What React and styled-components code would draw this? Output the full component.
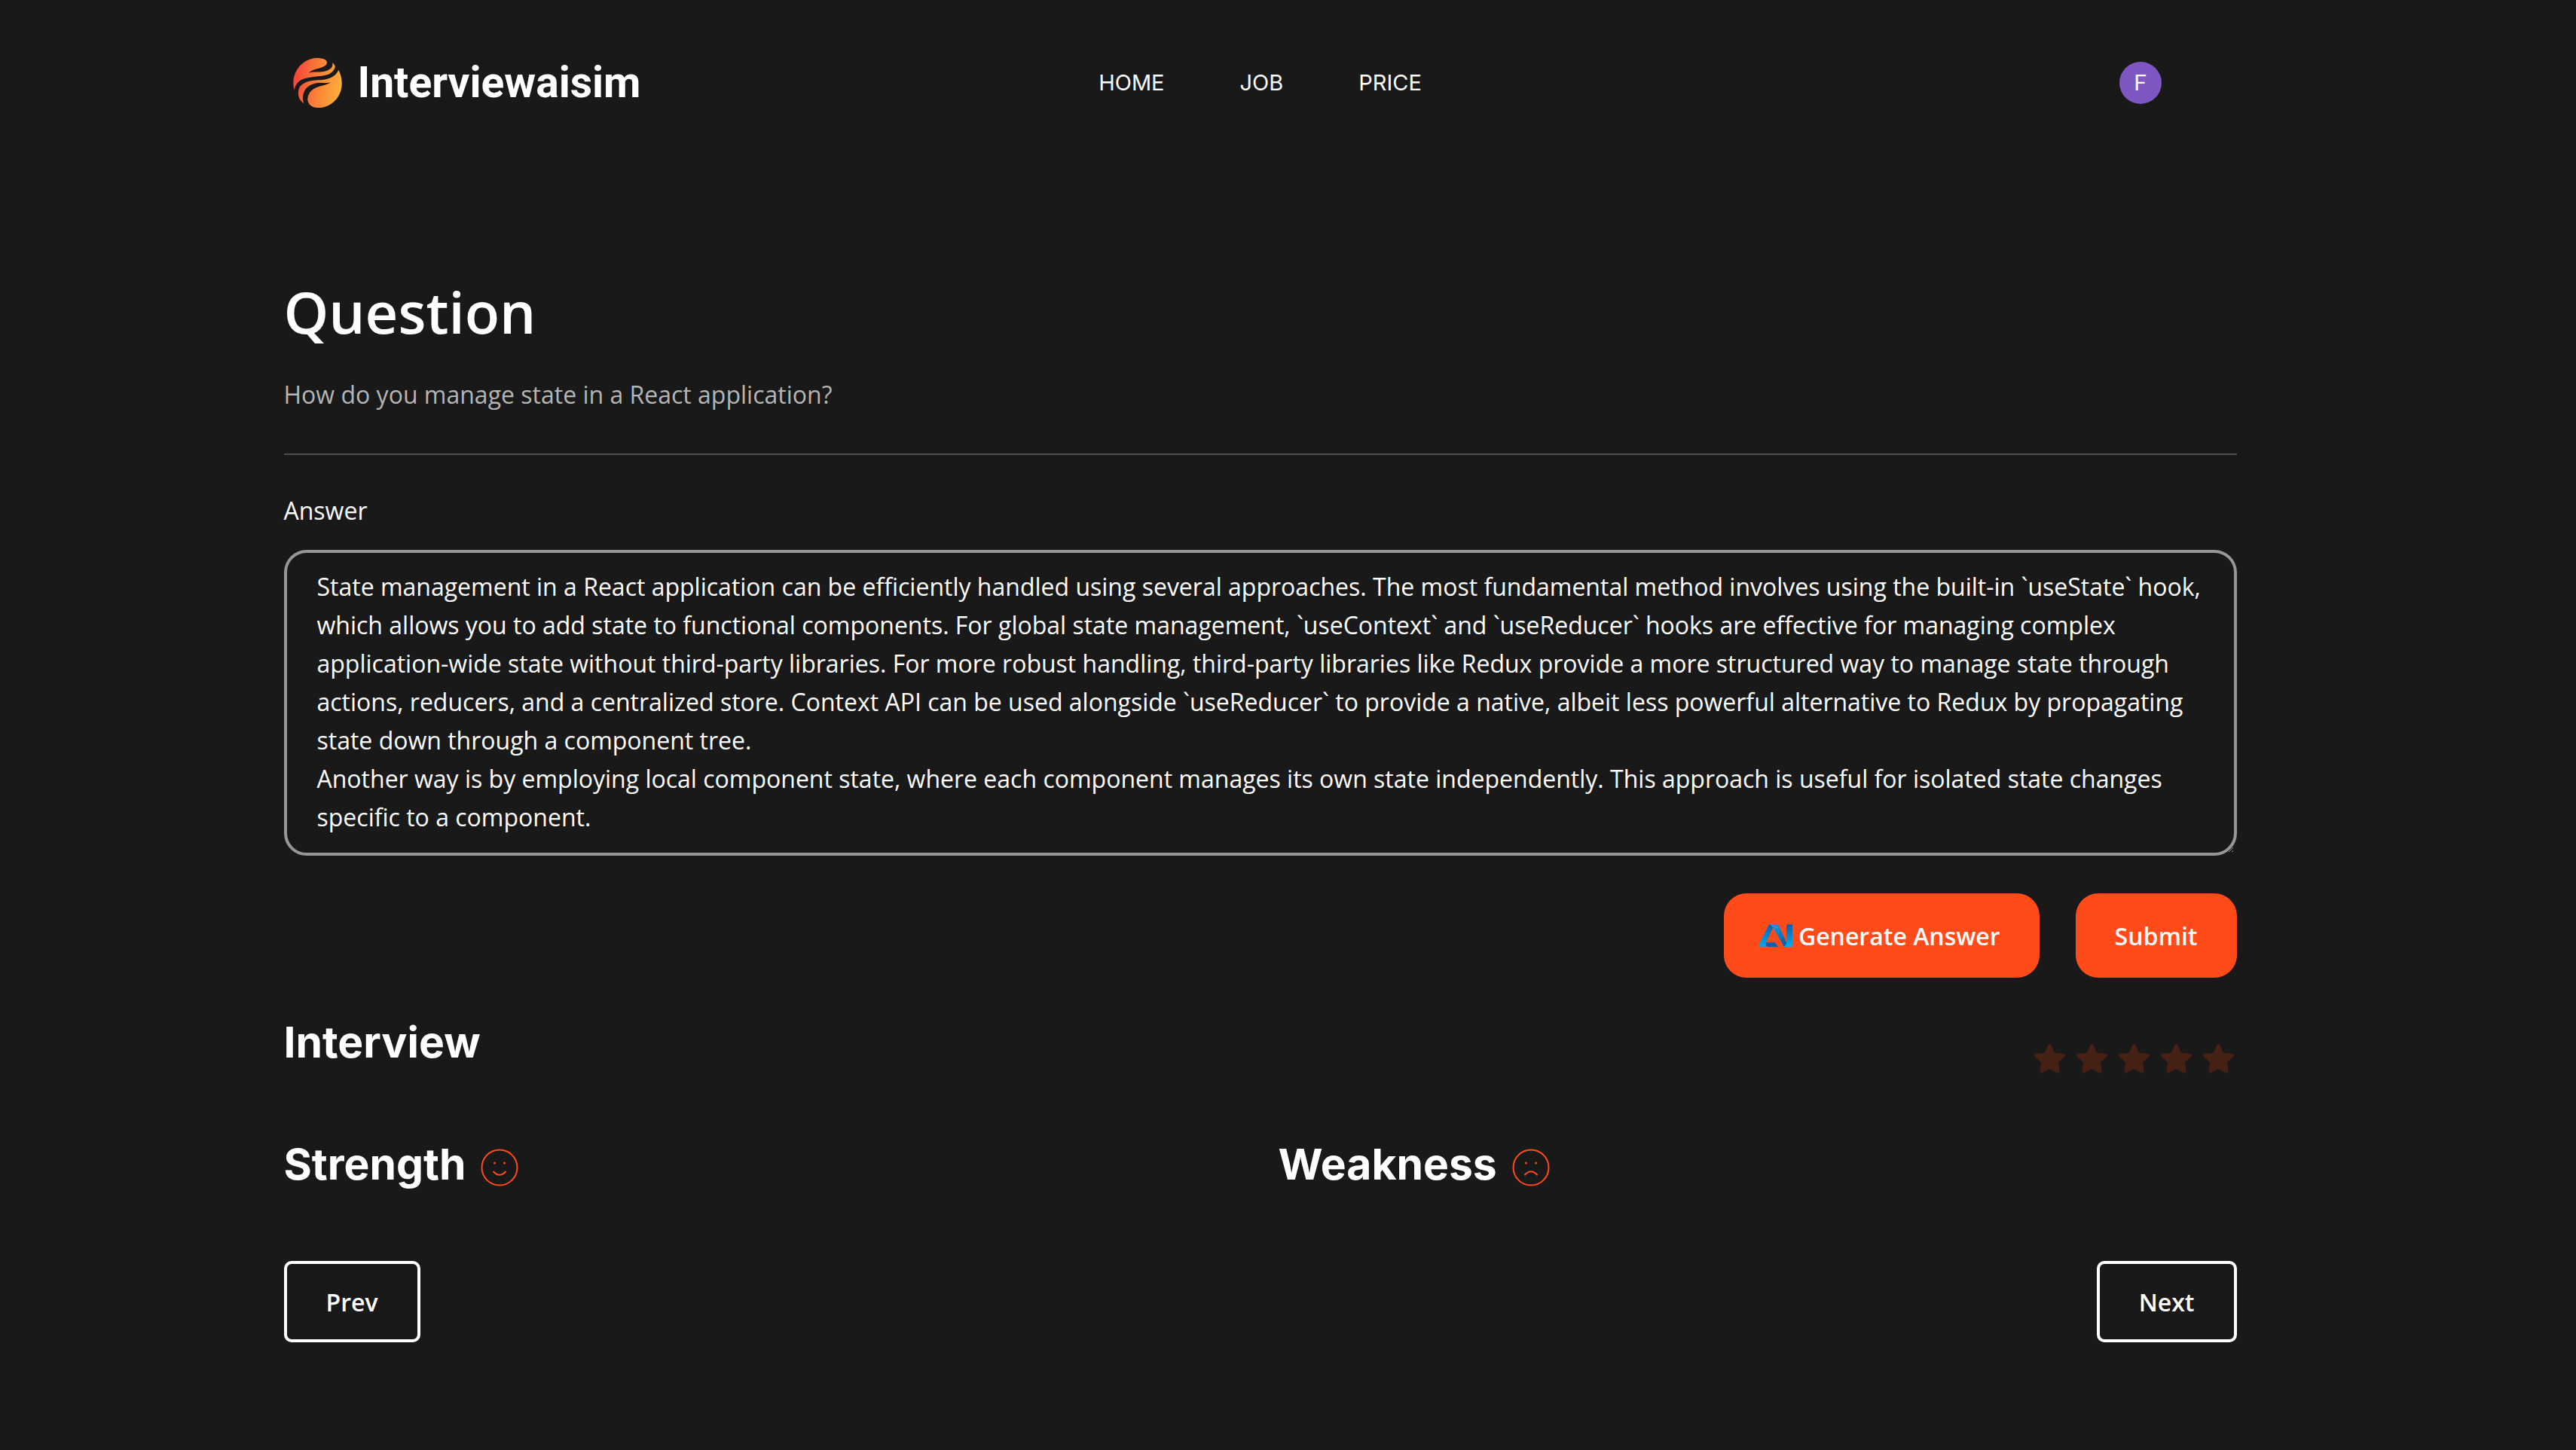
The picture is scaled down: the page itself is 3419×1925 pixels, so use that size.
import React, { useState } from "react";
import styled, { createGlobalStyle } from "styled-components";

const sans = `"Open Sans", "Noto Sans", sans-serif`;
const display = `Inter, "Open Sans", sans-serif`;
const accent = "#ff4b1a";

const GlobalStyle = createGlobalStyle`
  *, *::before, *::after { box-sizing: border-box; }
  body {
    margin: 0;
    min-height: 100vh;
    background: #191919;
    color: #fff;
    font-family: ${sans};
    font-size: 32px;
    line-height: 51px;
  }
`;

const Page = styled.div`
  padding: 0 112px 0 38px;
`;

const Container = styled.div`
  width: 100%;
  max-width: 2592px;
  margin: 0 auto;
`;

const Header = styled(Container).attrs({ as: "header" })`
  display: grid;
  grid-template-columns: 1fr auto 1fr;
  align-items: center;
  height: 220px;
`;

const Brand = styled.a`
  display: flex;
  align-items: center;
  gap: 20px;
  padding-left: 12px;
  color: #fff;
  text-decoration: none;
  font: 700 57px/66px Roboto, sans-serif;
`;

const Nav = styled.nav`
  display: flex;
  gap: 100px;
`;

const NavLink = styled.a`
  color: #fff;
  text-decoration: none;
  font: 400 29px/44px ${display};
`;

const Avatar = styled.button`
  justify-self: end;
  width: 56px;
  height: 56px;
  margin-right: 100px;
  padding: 0;
  border: 0;
  border-radius: 50%;
  background: #7e57c2;
  color: #fff;
  font: 400 30px/56px Roboto, sans-serif;
`;

const Main = styled(Container).attrs({ as: "main" })`
  padding: 146px 0 140px;
`;

const Title = styled.h1`
  margin: 0;
  font-size: 76px;
  font-weight: 600;
  line-height: 96px;
`;

const Prompt = styled.p`
  margin: 36px 0 53px;
  color: #b5b5b5;
`;

const Divider = styled.hr`
  height: 2px;
  margin: 0 0 48px;
  border: 0;
  background: #4c4d52;
`;

const AnswerLabel = styled.label`
  display: block;
  margin-bottom: 27px;
`;

const AnswerBox = styled.textarea`
  display: block;
  width: 100%;
  padding: 19px 40px 22px;
  border: 4px solid #999694;
  border-radius: 30px;
  background: transparent;
  color: #fff;
  font: 400 32px/51px ${sans};
  overflow: hidden;
`;

const Row = styled.div`
  display: flex;
  justify-content: ${(p) => p.$justify || "space-between"};
  gap: 48px;
  margin-top: ${(p) => p.$top}px;
`;

const Button = styled.button`
  display: flex;
  align-items: center;
  gap: 8px;
  height: 112px;
  padding: 0 52px 0 ${(p) => (p.$withIcon ? 46 : 52)}px;
  border: 0;
  border-radius: 30px;
  background: ${accent};
  color: #fff;
  font: 600 32px/51px ${sans};
`;

const OutlineButton = styled(Button)`
  height: 108px;
  border: 4px solid #fff;
  border-radius: 10px;
  background: transparent;
`;

const Heading = styled.h2`
  display: flex;
  align-items: center;
  gap: 20px;
  margin: 0;
  font: 700 57px/80px ${display};
`;

const Rating = styled.fieldset`
  display: flex;
  gap: 8px;
  margin: 0;
  padding: 44px 0 0;
  border: 0;
`;

const Star = styled.label`
  display: flex;
  justify-content: center;
  width: 48px;
  height: 40px;
  color: ${(p) => (p.$on ? accent : "#472015")};
`;

const HiddenRadio = styled.input`
  appearance: none;
  position: absolute;
  width: 1px;
  height: 1px;
  margin: 0;
  opacity: 0;
`;

const Columns = styled.div`
  display: grid;
  grid-template-columns: 1fr 1fr;
  gap: 48px;
  margin-top: 80px;
`;

const FaceSvg = styled.svg`
  width: 50px;
  height: 50px;
  margin-top: 8px;
  fill: none;
  stroke: ${accent};
  stroke-width: 2;
  stroke-linecap: round;
`;

const Logo = () => (
  <svg width="66" height="66" viewBox="0 0 66 66" aria-hidden="true">
    <defs>
      <linearGradient id="flame" gradientUnits="userSpaceOnUse" x1="0" y1="20" x2="66" y2="30">
        <stop offset="0" stopColor="#f4423a" />
        <stop offset="0.5" stopColor="#fb7f38" />
        <stop offset="1" stopColor="#fdb13b" />
      </linearGradient>
    </defs>
    <g fill="url(#flame)">
      <path d="M1.500 42.500C-4 22 10 1 31 0C39 0 45 2 45 6C45 11 37 13 31 14.500C27 15.500 23 18 20.500 19.700C27 18 34 19 41 18C49 16 54 12 52 6.300C55 8 56.500 11 55.500 13C53.500 18 50 20.500 46 22C38 25 20 24 11 29C5 32.500 3 37 1.500 42.500Z" />
      <path d="M60.300 15.700C71 36 62 62 37 66C27 67 20.500 63 19.300 56C19 49 23 43.500 27.700 40.700C34 37 43 37 50.300 32.300C43 34 38 32.500 31 33.300C23 35 17 39 14.500 45C12.500 50 12.500 55 14.300 60.500C8 56 5.500 49 7.700 41C10 34 18 31 27.700 29.700C35 29 39 29.500 44.300 28C52 26 58 22 60.300 15.700Z" />
    </g>
  </svg>
);

const AiIcon = () => (
  <svg width="45" height="30" viewBox="0 0 45 30" aria-hidden="true">
    <defs>
      <linearGradient id="aiLeft" x1="0" y1="1" x2="0.8" y2="0">
        <stop offset="0" stopColor="#00aeef" />
        <stop offset="1" stopColor="#0a62ae" />
      </linearGradient>
      <linearGradient id="aiMid" x1="0" y1="0" x2="1" y2="1">
        <stop offset="0" stopColor="#0aa5e8" />
        <stop offset="1" stopColor="#0a56a4" />
      </linearGradient>
      <linearGradient id="aiRight" x1="0" y1="0" x2="0" y2="1">
        <stop offset="0" stopColor="#0a5cab" />
        <stop offset="1" stopColor="#00aeef" />
      </linearGradient>
    </defs>
    <path d="M13 2Q14 0 16 0L20 3L10 24V30H3Q-1 30 1 26Z" fill="url(#aiLeft)" />
    <path d="M10 24H22L26 30H12Q9 28 10 24Z" fill="#0b5fad" />
    <path d="M15 0H24Q26 0 27 2L37 24V29L34 30L19 4Z" fill="url(#aiMid)" />
    <path d="M37 3Q37 0 40 0H45V27Q45 30 42 30H33Q37 28 37 24Z" fill="url(#aiRight)" />
  </svg>
);

const StarIcon = () => (
  <svg width="41" height="39" viewBox="0 0 41 39" fill="currentColor" aria-hidden="true">
    <path d="M18.500 1.200Q20.500-1 22.500 1.200L27 11.500L38.500 12.800Q42 14 40.300 17L32 24.500L33.500 36.600Q33 39.200 30.500 38.200L20.500 33L10.500 38.200Q8 39.200 7.500 36.600L9 24.500L.7 17Q-1 14 2.500 12.800L14 11.500Z" />
  </svg>
);

const Face = ({ sad }) => (
  <FaceSvg viewBox="0 0 50 50" aria-hidden="true">
    <circle cx="25" cy="25" r="23.500" />
    <circle cx="18.500" cy="19" r="1.500" fill={accent} stroke="none" />
    <circle cx="31.500" cy="19" r="1.500" fill={accent} stroke="none" />
    <path d={sad ? "M17 34.500Q25 26 33 34.500" : "M17 30.500Q25 39 33 30.500"} />
  </FaceSvg>
);

const initialAnswer =
  "State management in a React application can be efficiently handled using several approaches. The most fundamental method involves using the built-in `useState` hook, which allows you to add state to functional components. For global state management, `useContext` and `useReducer` hooks are effective for managing complex application-wide state without third-party libraries. For more robust handling, third-party libraries like Redux provide a more structured way to manage state through actions, reducers, and a centralized store. Context API can be used alongside `useReducer` to provide a native, albeit less powerful alternative to Redux by propagating state down through a component tree.\nAnother way is by employing local component state, where each component manages its own state independently. This approach is useful for isolated state changes specific to a component.";

export default function App() {
  const [answer, setAnswer] = useState(initialAnswer);
  const [score, setScore] = useState(0);

  return (
    <>
      <GlobalStyle />
      <Page>
        <Header>
          <Brand href="#">
            <Logo />
            Interviewaisim
          </Brand>
          <Nav>
            <NavLink href="#home">HOME</NavLink>
            <NavLink href="#job">JOB</NavLink>
            <NavLink href="#price">PRICE</NavLink>
          </Nav>
          <Avatar type="button">F</Avatar>
        </Header>
        <Main>
          <Title>Question</Title>
          <Prompt>How do you manage state in a React application?</Prompt>
          <Divider />
          <AnswerLabel htmlFor="answer">Answer</AnswerLabel>
          <AnswerBox id="answer" rows={7} spellCheck={false} value={answer} onChange={(e) => setAnswer(e.target.value)} />
          <Row $justify="flex-end" $top={50}>
            <Button type="button" $withIcon>
              <AiIcon />
              Generate Answer
            </Button>
            <Button type="submit">Submit</Button>
          </Row>
          <Row $top={44}>
            <Heading>Interview</Heading>
            <Rating aria-label="Score">
              {[1, 2, 3, 4, 5].map((n) => (
                <Star key={n} $on={n <= score}>
                  <HiddenRadio type="radio" name="score" aria-label={`${n} of 5`} checked={score === n} onChange={() => setScore(n)} />
                  <StarIcon />
                </Star>
              ))}
            </Rating>
          </Row>
          <Columns>
            <Heading>
              Strength <Face />
            </Heading>
            <Heading>
              Weakness <Face sad />
            </Heading>
          </Columns>
          <Row $top={88}>
            <OutlineButton type="button">Prev</OutlineButton>
            <OutlineButton type="button">Next</OutlineButton>
          </Row>
        </Main>
      </Page>
    </>
  );
}
